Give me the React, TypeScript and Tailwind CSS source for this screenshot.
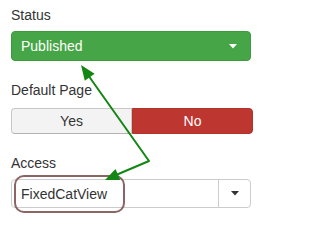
import React from "react";

function Caret({ color }: { color: string }) {
  return (
    <svg width="8" height="5" viewBox="0 0 8 5" className="block">
      <path d="M0 0 L8 0 L4 4.5 Z" fill={color} />
    </svg>
  );
}

export default function App() {
  return (
    <div className="relative w-[264px] h-[223px] bg-white font-['Liberation_Sans',Arial,sans-serif] text-[14px] text-[#333]">
      <div className="flex flex-col pl-[11px] pt-[5px] w-[253px]">
        <div className="leading-[20px] h-[20px]">Status</div>
        <div className="mt-[6px] h-[30px] w-[240px] flex items-center justify-between rounded-[4px] bg-[#46a546] border border-[#3f9a3f] text-white pl-[9px] pr-[13px] leading-[20px]">
          <span>Published</span>
          <Caret color="#ffffff" />
        </div>
        <div className="mt-[19px] leading-[20px] h-[20px]">Default Page</div>
        <div className="mt-[8px] w-[242px] h-[26px] flex leading-[20px]">
          <div className="w-[121px] flex items-center justify-center rounded-l-[4px] border border-[#c8c8c8] border-b-[#b3b3b3] bg-[#f3f3f3] text-[#333]">
            Yes
          </div>
          <div className="w-[121px] flex items-center justify-center rounded-r-[4px] bg-[#bd362f] border border-[#b0332c] text-white">
            No
          </div>
        </div>
        <div className="mt-[19px] leading-[20px] h-[20px]">Access</div>
        <div className="mt-[6px] h-[29px] w-[240px] flex rounded-[4px] border border-[#cccccc] bg-white leading-[20px]">
          <div className="flex-1 flex items-center pl-[9px] text-[#333]">FixedCatView</div>
          <div className="w-[32px] flex items-center justify-center border-l border-[#cccccc]">
            <Caret color="#333333" />
          </div>
        </div>
      </div>
      <svg
        className="absolute inset-0 pointer-events-none"
        width="264"
        height="223"
        viewBox="0 0 264 223"
      >
        <rect x="15" y="176" width="109" height="36" rx="9" ry="9" fill="none" stroke="#8b6464" strokeWidth="2" />
        <polyline points="88,75 149,161 116,175" fill="none" stroke="#138613" strokeWidth="2" strokeLinejoin="round" />
        <path d="M81 65 L94.6 73.7 L84.8 80.7 Z" fill="#138613" />
        <path d="M105 180 L115.5 168.9 L120.3 179.9 Z" fill="#138613" />
      </svg>
    </div>
  );
}
